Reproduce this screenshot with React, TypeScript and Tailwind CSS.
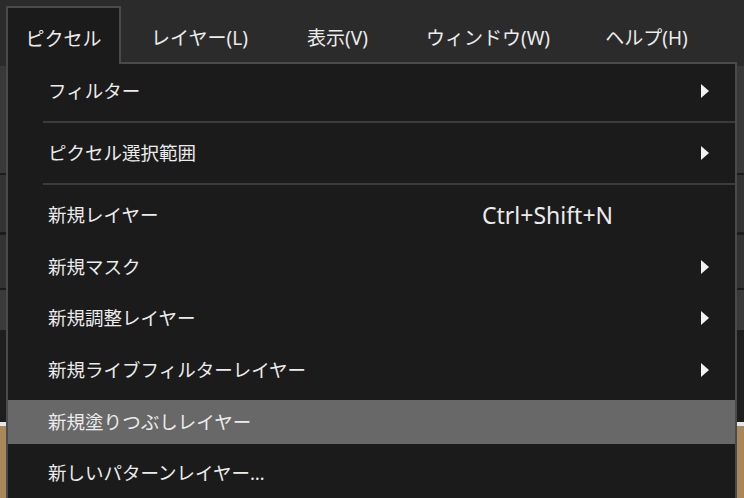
import { ReactNode } from 'react'

const font = { fontFamily: '"Noto Sans", "Noto Sans CJK JP", sans-serif' }

type Item = { label: string; shortcut?: string; sub?: boolean; active?: boolean }

function Arrow() {
  return (
    <svg width="8" height="14" viewBox="0 0 8 14" className="block">
      <path d="M0 0 L8 7 L0 14 Z" fill="#f2f2f2" />
    </svg>
  )
}

function Row({ item }: { item: Item }) {
  return (
    <div className="flex h-[51.6px] items-center">
      <div
        className={
          'flex h-[44px] w-full items-center text-[18.5px] text-[#ececec] ' +
          (item.active ? 'bg-[#686868]' : '')
        }
      >
        <span className="w-[474px] pl-[40px] whitespace-nowrap">{item.label}</span>
        {item.shortcut && (
          <span className="text-[23px] whitespace-nowrap">{item.shortcut}</span>
        )}
        {item.sub && (
          <span className="ml-auto mr-[26px]">
            <Arrow />
          </span>
        )}
      </div>
    </div>
  )
}

function Separator() {
  return (
    <div className="flex h-[10.6px] items-center pl-[35px]">
      <div className="h-[2px] w-full bg-[#3b3b3b]" />
    </div>
  )
}

function MenuLabel({ w, children }: { w: string; children: ReactNode }) {
  return (
    <div className={w + ' flex h-[64px] items-center justify-center pt-[12px] text-[19px] text-[#ececec] whitespace-nowrap'}>
      {children}
    </div>
  )
}

export default function App() {
  return (
    <div className="relative h-[498px] w-[744px] overflow-hidden bg-[#2b2b2b]" style={font}>
      {/* menu bar */}
      <div className="relative z-20 flex h-[66px] items-start pl-[6px]">
        <div className="mt-[6px] flex h-[58px] w-[115px] items-center justify-center border-x-2 border-t-2 border-[#4a4a4a] bg-[#1b1b1b] pt-[6px] text-[19px] text-[#ececec]">
          ピクセル
        </div>
        <MenuLabel w="w-[157px]">レイヤー(L)</MenuLabel>
        <MenuLabel w="w-[119px]">表示(V)</MenuLabel>
        <MenuLabel w="w-[182px]">ウィンドウ(W)</MenuLabel>
        <MenuLabel w="w-[135px]">ヘルプ(H)</MenuLabel>
      </div>

      {/* panels behind the menu */}
      <div className="flex flex-col">
        <div className="h-[107px] bg-[#393939]" />
        <div className="h-[2px] bg-[#1c1c1c]" />
        <div className="h-[57px] bg-[#333333]" />
        <div className="h-[3px] bg-[#1c1c1c]" />
        <div className="h-[53px] bg-[#333333]" />
        <div className="h-[2px] bg-[#1c1c1c]" />
        <div className="h-[40px] bg-[#3a3a3a]" />
        <div className="h-[92px] bg-[#1e1e1e]" />
        <div className="h-[4px] bg-[#e6e6e6]" />
        <div className="h-[80px] bg-[#a8875a]" />
      </div>

      {/* dropdown */}
      <div className="absolute left-[6px] top-[62px] z-10 w-[731px] border-2 border-[#4a4a4a] bg-[#1b1b1b] pt-[1px]">
        <Row item={{ label: 'フィルター', sub: true }} />
        <Separator />
        <Row item={{ label: 'ピクセル選択範囲', sub: true }} />
        <Separator />
        <Row item={{ label: '新規レイヤー', shortcut: 'Ctrl+Shift+N' }} />
        <Row item={{ label: '新規マスク', sub: true }} />
        <Row item={{ label: '新規調整レイヤー', sub: true }} />
        <Row item={{ label: '新規ライブフィルターレイヤー', sub: true }} />
        <Row item={{ label: '新規塗りつぶしレイヤー', active: true }} />
        <Row item={{ label: '新しいパターンレイヤー…' }} />
      </div>
    </div>
  )
}
